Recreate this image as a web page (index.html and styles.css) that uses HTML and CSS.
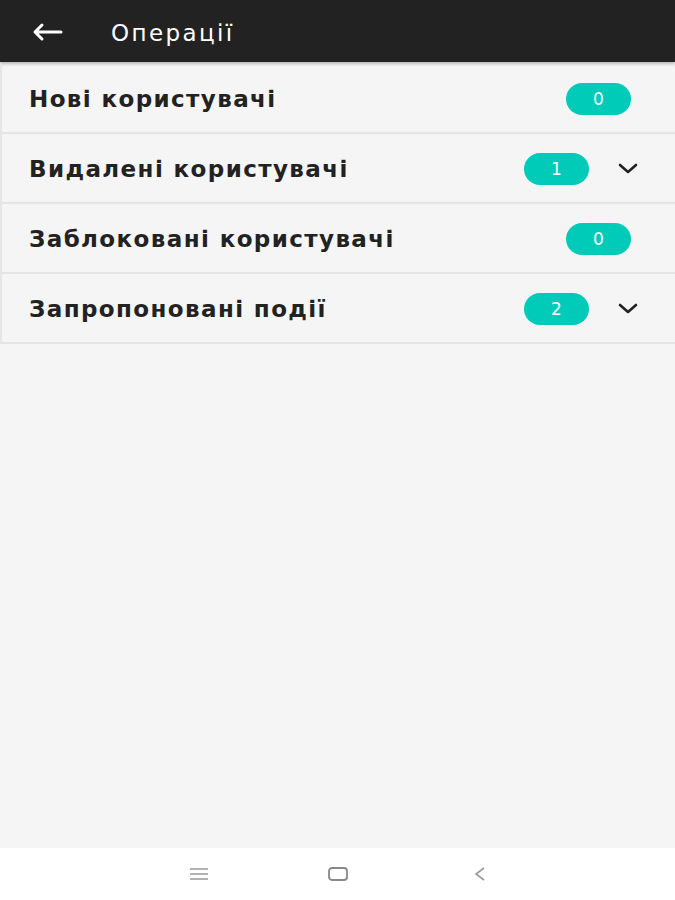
FILE: index.html
```html
<!DOCTYPE html>
<html lang="uk">

<head>
    <meta charset="UTF-8">
    <meta name="viewport" content="width=device-width, initial-scale=1.0">
    <title>Операції</title>
    <link rel="stylesheet" href="styles.css">
</head>

<body>
    <div class="screen">
        <!-- Top bar -->
        <header class="topbar">
            <svg class="back" width="32" height="20" viewBox="0 0 32 20">
                <path d="M30 10 H4 M11 3 L4 10 L11 17" fill="none" stroke="#fff" stroke-width="3" stroke-linecap="round" stroke-linejoin="round" />
            </svg>
            <span class="title">Операції</span>
        </header>

        <!-- Operation list -->
        <ul class="list">
            <li class="row">
                <span class="label">Нові користувачі</span>
                <span class="badge">0</span>
                <span class="chev-space"></span>
            </li>
            <li class="row">
                <span class="label">Видалені користувачі</span>
                <span class="badge">1</span>
                <svg class="chev" width="20" height="12" viewBox="0 0 20 12">
                    <path d="M2 2 L10 9 L18 2" fill="none" stroke="#222" stroke-width="2.6" stroke-linecap="round" stroke-linejoin="round" />
                </svg>
            </li>
            <li class="row">
                <span class="label">Заблоковані користувачі</span>
                <span class="badge">0</span>
                <span class="chev-space"></span>
            </li>
            <li class="row">
                <span class="label">Запропоновані події</span>
                <span class="badge">2</span>
                <svg class="chev" width="20" height="12" viewBox="0 0 20 12">
                    <path d="M2 2 L10 9 L18 2" fill="none" stroke="#222" stroke-width="2.6" stroke-linecap="round" stroke-linejoin="round" />
                </svg>
            </li>
        </ul>

        <div class="fill"></div>

        <!-- System navigation -->
        <nav class="sysnav">
            <svg class="nav-menu" width="20" height="14" viewBox="0 0 20 14">
                <path d="M1 2 H19 M1 7 H19 M1 12 H19" stroke="#999" stroke-width="1.6" />
            </svg>
            <svg class="nav-home" width="22" height="16" viewBox="0 0 22 16">
                <rect x="2" y="2" width="18" height="12" rx="3" fill="none" stroke="#888" stroke-width="1.8" />
            </svg>
            <svg class="nav-back" width="14" height="16" viewBox="0 0 14 16">
                <path d="M11 2 L3 8 L11 14" fill="none" stroke="#999" stroke-width="1.6" />
            </svg>
        </nav>
    </div>
</body>

</html>
```

FILE: styles.css
```css
/* Whole page */
body {
    margin: 0;
    background-color: #f5f5f5;
    font-family: 'DejaVu Sans', 'Liberation Sans', Arial, sans-serif;
}

.screen {
    display: flex;
    flex-direction: column;
    height: 900px;
}

/* Top bar */
.topbar {
    height: 62px;
    background-color: #222222;
    display: flex;
    align-items: center;
    padding-left: 31px;
    box-shadow: 0 2px 3px rgba(0, 0, 0, 0.25);
}

.back {
    margin-top: 2px;
}

.title {
    color: #ffffff;
    font-size: 23px;
    margin-left: 48px;
    letter-spacing: 2.4px;
    margin-top: 3px;
}

/* List of operations */
.list {
    list-style: none;
    margin: 2px 0 0 0;
    padding: 0;
    border-left: 2px solid #e6e6e6;
}

.row {
    height: 68px;
    display: flex;
    align-items: center;
    border-bottom: 2px solid #e4e4e4;
    padding-left: 27px;
    padding-right: 37px;
}

.label {
    flex: 1;
    font-size: 23px;
    font-weight: bold;
    color: #222222;
    letter-spacing: 1.4px;
    margin-top: 2px;
}

.badge {
    width: 65px;
    height: 32px;
    border-radius: 16px;
    background-color: #00cbb9;
    color: #ffffff;
    font-size: 17px;
    display: flex;
    align-items: center;
    justify-content: center;
    margin-top: 1px;
}

.chev {
    width: 20px;
    margin-left: 29px;
    margin-top: 1px;
}

.chev-space {
    width: 7px;
}

.fill {
    flex: 1;
}

/* Bottom system navigation */
.sysnav {
    height: 52px;
    background-color: #ffffff;
    display: flex;
    align-items: center;
    padding-left: 189px;
}

.nav-home {
    margin-left: 118px;
}

.nav-back {
    margin-left: 124px;
}
```
